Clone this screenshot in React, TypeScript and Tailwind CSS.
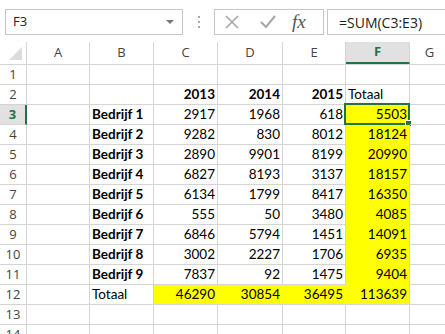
const cols = ["A", "B", "C", "D", "E", "F", "G"];
const widths = ["w-[63px]", "w-[64px]", "w-[64px]", "w-[65px]", "w-[63px]", "w-[64px]", "w-[40px]"];

const data: [number, number, number, number][] = [
  [2917, 1968, 618, 5503],
  [9282, 830, 8012, 18124],
  [2890, 9901, 8199, 20990],
  [6827, 8193, 3137, 18157],
  [6134, 1799, 8417, 16350],
  [555, 50, 3480, 4085],
  [6846, 5794, 1451, 14091],
  [3002, 2227, 1706, 6935],
  [7837, 92, 1475, 9404],
];

type Cell = { text?: string; bold?: boolean; left?: boolean; yellow?: boolean };

function buildRows(): Cell[][] {
  const rows: Cell[][] = [];
  rows.push([{}, {}, {}, {}, {}, {}, {}]);
  rows.push([
    {},
    {},
    { text: "2013", bold: true },
    { text: "2014", bold: true },
    { text: "2015", bold: true },
    { text: "Totaal", left: true },
    {},
  ]);
  data.forEach((d, i) => {
    rows.push([
      {},
      { text: `Bedrijf ${i + 1}`, bold: true, left: true },
      { text: String(d[0]) },
      { text: String(d[1]) },
      { text: String(d[2]) },
      { text: String(d[3]), yellow: true },
      {},
    ]);
  });
  rows.push([
    {},
    { text: "Totaal", left: true },
    { text: "46290", yellow: true },
    { text: "30854", yellow: true },
    { text: "36495", yellow: true },
    { text: "113639", yellow: true },
    {},
  ]);
  rows.push([{}, {}, {}, {}, {}, {}, {}]);
  rows.push([{}, {}, {}, {}, {}, {}, {}]);
  return rows;
}

export default function App() {
  const rows = buildRows();
  return (
    <div className="w-[445px] h-[334px] overflow-hidden bg-white font-['Lato',sans-serif] text-[13.5px] text-black">
      {/* formula bar */}
      <div className="flex h-[42px] items-start pt-[9px] pl-[5px] font-['Open_Sans',sans-serif] text-[13px] text-[#222]">
        <div className="flex h-[26px] w-[178px] items-center justify-between border border-[#c6c6c6] pl-[7px] pr-[8px]">
          <span>F3</span>
          <span className="h-0 w-0 border-x-[4px] border-t-[4px] border-x-transparent border-t-[#777]" />
        </div>
        <div className="flex w-[31px] flex-col items-center gap-[3px] pt-[7px]">
          <span className="h-[2px] w-[2px] bg-[#aaa]" />
          <span className="h-[2px] w-[2px] bg-[#aaa]" />
          <span className="h-[2px] w-[2px] bg-[#aaa]" />
        </div>
        <div className="flex h-[26px] w-[110px] items-center border border-[#c6c6c6]">
          <svg width="14" height="14" viewBox="0 0 14 14" className="ml-[10px]">
            <path d="M1 1 L13 13 M13 1 L1 13" stroke="#a6a6a6" strokeWidth="1.6" />
          </svg>
          <svg width="16" height="14" viewBox="0 0 16 14" className="ml-[21px]">
            <path d="M1 7 L6 12 L15 1" stroke="#a6a6a6" strokeWidth="2" fill="none" />
          </svg>
          <span className="ml-[16px] font-['Liberation_Serif',serif] text-[19px] italic text-[#555]">fx</span>
        </div>
        <div className="ml-[3px] flex h-[26px] flex-1 items-center border border-r-0 border-[#c6c6c6] pl-[11px] text-[14px] text-[#222]">
          =SUM(C3:E3)
        </div>
      </div>

      {/* column headers */}
      <div className="flex h-[23px] border-b border-[#d4d4d4] font-['Open_Sans',sans-serif] text-[13px] text-[#444]">
        <div className="relative w-[27px] shrink-0 border-r border-[#d4d4d4]">
          <svg width="13" height="13" viewBox="0 0 13 13" className="absolute bottom-[4px] right-[4px]">
            <polygon points="13,0 13,13 0,13" fill="#dcdcdc" />
          </svg>
        </div>
        {cols.map((c, i) => (
          <div
            key={c}
            className={`${widths[i]} shrink-0 flex items-center justify-center border-r border-[#d4d4d4] ${
              c === "F" ? "bg-[#e1e1e1] font-bold text-[#217346] border-b-2 border-b-[#217346]" : ""
            }`}
          >
            {c}
          </div>
        ))}
      </div>

      {/* rows */}
      {rows.map((r, ri) => {
        const n = ri + 1;
        const selRow = n === 3;
        return (
          <div key={n} className="flex h-[20px]">
            <div
              className={`w-[27px] shrink-0 flex items-center justify-center border-b border-[#d4d4d4] font-['Open_Sans',sans-serif] text-[13px] ${
                selRow
                  ? "bg-[#e1e1e1] font-bold text-[#217346] border-r-2 border-r-[#217346]"
                  : "text-[#444] border-r border-[#d4d4d4]"
              }`}
            >
              {n}
            </div>
            {r.map((cell, ci) => {
              const isF = ci === 5;
              const lastRowYellow = n === 12;
              const y = cell.yellow;
              return (
                <div
                  key={ci}
                  className={`${widths[ci]} shrink-0 relative flex items-end px-[2px] leading-none border-b border-r ${
                    y ? "bg-[#ffff00]" : ""
                  } ${y && !lastRowYellow ? "border-b-[#ffff00]" : "border-b-[#d4d4d4]"} ${
                    y && !isF ? "border-r-[#ffff00]" : "border-r-[#d4d4d4]"
                  } ${cell.left ? "justify-start" : "justify-end"} ${cell.bold ? "font-bold" : ""}`}
                >
                  <span className="pb-[3px]">{cell.text}</span>
                  {n === 3 && isF && (
                    <div className="absolute -left-[2px] -top-[2px] h-[22px] w-[66px] border-2 border-[#217346]">
                      <span className="absolute -bottom-[4px] -right-[4px] h-[7px] w-[7px] border border-white bg-[#217346]" />
                    </div>
                  )}
                </div>
              );
            })}
          </div>
        );
      })}
    </div>
  );
}
